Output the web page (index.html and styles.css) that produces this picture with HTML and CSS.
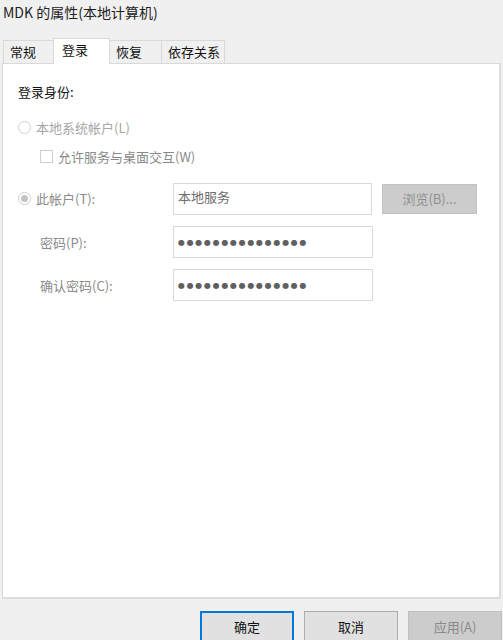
FILE: index.html
```html
<!DOCTYPE html>
<html lang="zh-CN">
<head>
    <meta charset="UTF-8">
    <title>MDK 的属性(本地计算机)</title>
    <link rel="stylesheet" href="styles.css">
</head>
<body>
    <div class="window-title">MDK 的属性(本地计算机)</div>
    <div class="tabs">
        <div class="tab tab-general">常规</div>
        <div class="tab tab-logon active">登录</div>
        <div class="tab tab-recovery">恢复</div>
        <div class="tab tab-deps">依存关系</div>
    </div>
    <div class="panel">
        <div class="section-title">登录身份:</div>
        <div class="option-row local-row">
            <span class="radio"></span>
            <span class="option-text light">本地系统帐户(L)</span>
        </div>
        <div class="option-row check-row">
            <span class="checkbox"></span>
            <span class="option-text">允许服务与桌面交互(W)</span>
        </div>
        <div class="account-grid">
            <div class="option-row">
                <span class="radio checked"></span>
                <span class="option-text">此帐户(T):</span>
            </div>
            <div class="field field-account">本地服务</div>
            <div class="browse-button">浏览(B)...</div>

            <div class="field-label">密码(P):</div>
            <div class="field"><span class="dots">●●●●●●●●●●●●●●●</span></div>
            <div></div>

            <div class="field-label">确认密码(C):</div>
            <div class="field"><span class="dots">●●●●●●●●●●●●●●●</span></div>
            <div></div>
        </div>
    </div>
    <div class="footer">
        <button class="dlg-button default">确定</button>
        <button class="dlg-button">取消</button>
        <button class="dlg-button disabled">应用(A)</button>
    </div>
</body>
</html>
```

FILE: styles.css
```css
body {
    margin: 0;
    padding: 0;
    background-color: #f0f0f0;
    font-family: "Noto Sans CJK SC", "Liberation Sans", sans-serif;
    font-size: 13px;
    color: #000;
    overflow: hidden;
    height: 640px;
}
.window-title {
    height: 38px;
    padding-left: 3px;
    font-size: 14px;
    line-height: 24px;
    color: #222;
}
.tabs {
    display: flex;
    align-items: flex-end;
    height: 25px;
    margin-left: 3px;
    position: relative;
    z-index: 1;
}
.tab {
    box-sizing: border-box;
    height: 23px;
    border: 1px solid #d9d9d9;
    border-bottom: none;
    border-right: none;
    background-color: #f0f0f0;
    padding-left: 6px;
    line-height: 22px;
    font-size: 13px;
    color: #111;
}
.tab-deps {
    border-right: 1px solid #d9d9d9;
}
.tab.active {
    height: 26px;
    margin-bottom: -1px;
    background-color: #fff;
    padding-left: 8px;
    line-height: 22px;
    border-right: 1px solid #d9d9d9;
}
.tab.active + .tab {
    border-left: none;
}
.tab-general { width: 50px; }
.tab-logon { width: 57px; }
.tab-recovery { width: 51px; }
.tab-deps { width: 64px; }
.panel {
    box-sizing: border-box;
    margin: 0 2px 0 2px;
    height: 536px;
    background-color: #fff;
    border: 1px solid #d9d9d9;
    border-right: 2px solid #dcdcdc;
    border-bottom: 2px solid #dcdcdc;
    padding: 19px 0 0 15px;
}
.section-title {
    height: 18px;
    line-height: 18px;
    color: #111;
}
.option-row {
    display: flex;
    align-items: center;
    height: 18px;
}
.local-row {
    margin-top: 17px;
}
.check-row {
    margin-top: 11px;
    padding-left: 22px;
}
.option-text {
    color: #8a8a8a;
    margin-left: 5px;
}
.option-text.light {
    color: #a6a6a6;
}
.radio {
    box-sizing: border-box;
    width: 13px;
    height: 13px;
    border: 1px solid #cfcfcf;
    border-radius: 50%;
    background-color: #fff;
    display: flex;
    align-items: center;
    justify-content: center;
}
.radio.checked::after {
    content: "";
    width: 7px;
    height: 7px;
    border-radius: 50%;
    background-color: #c4c4c4;
}
.checkbox {
    box-sizing: border-box;
    width: 13px;
    height: 13px;
    border: 1px solid #cfcfcf;
    background-color: #fff;
}
.account-grid {
    display: grid;
    grid-template-columns: 146px 200px 95px;
    grid-template-rows: 32px 32px 32px;
    column-gap: 9px;
    row-gap: 11px;
    margin-top: 18px;
    align-items: center;
}
.account-grid .option-row {
    align-self: start;
    margin-top: 6px;
}
.field {
    box-sizing: border-box;
    height: 32px;
    border: 1px solid #d9d9d9;
    background-color: #fff;
    padding: 4px 0 0 4px;
    color: #6d6d6d;
    line-height: 18px;
}
.field-account {
    width: 199px;
}
.field-label {
    padding-left: 22px;
    color: #8a8a8a;
}
.dots {
    font-family: "DejaVu Sans", sans-serif;
    font-size: 8px;
    letter-spacing: 1.7px;
    color: #606060;
    line-height: 18px;
}
.browse-button {
    box-sizing: border-box;
    height: 30px;
    align-self: start;
    margin-top: 1px;
    background-color: #cccccc;
    border: 1px solid #c2c2c2;
    color: #8f8f8f;
    text-align: center;
    line-height: 27px;
}
.footer {
    display: flex;
    justify-content: flex-end;
    gap: 10px;
    padding: 12px 1px 0 0;
}
.dlg-button {
    box-sizing: border-box;
    width: 94px;
    height: 31px;
    font-family: "Noto Sans CJK SC", "Liberation Sans", sans-serif;
    font-size: 13px;
    color: #111;
    background-color: #e1e1e1;
    border: 1px solid #adadad;
    padding: 0;
}
.dlg-button.default {
    border: 2px solid #0078d7;
}
.dlg-button.disabled {
    background-color: #cccccc;
    border-color: #bfbfbf;
    color: #8a8a8a;
}
```
